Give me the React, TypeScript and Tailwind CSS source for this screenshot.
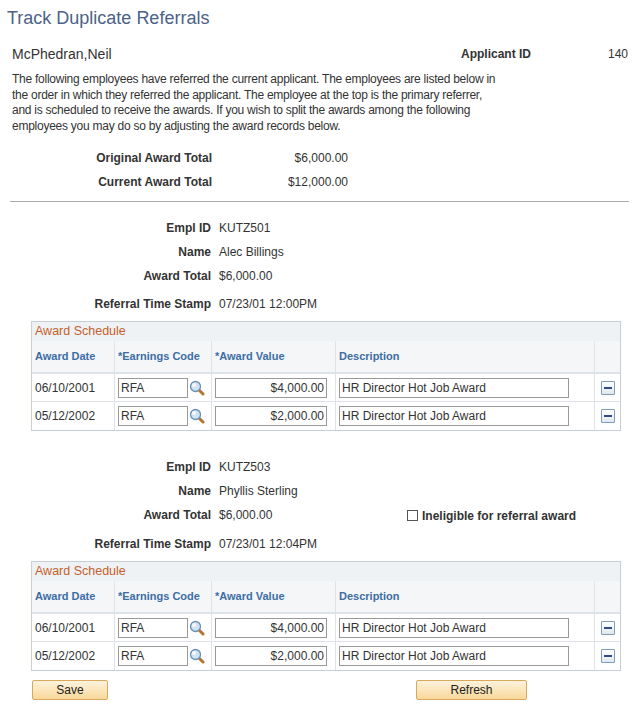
import React from "react";

const Mag = () => (
  <svg width="16" height="16" viewBox="0 0 16 16" className="shrink-0">
    <line x1="9.5" y1="9.5" x2="14" y2="14" stroke="#b8742a" strokeWidth="3" strokeLinecap="round" />
    <circle cx="6.5" cy="6.5" r="5" fill="#cfe3f3" stroke="#6a8fb3" strokeWidth="1.3" />
    <circle cx="5" cy="5" r="2" fill="#fff" opacity="0.8" />
  </svg>
);

const Minus = () => (
  <div className="w-[14px] h-[14px] border border-[#7f9db9] bg-gradient-to-b from-white to-[#dfe8f1] flex items-center justify-center rounded-[1px]">
    <div className="w-[8px] h-[2px] bg-[#2b4f82]" />
  </div>
);

const Field = ({ label, value }: { label: string; value: string }) => (
  <div className="flex items-center">
    <div className="w-[219px] text-right font-bold text-[#333] pr-[8px]">{label}</div>
    <div className="text-[#333]">{value}</div>
  </div>
);

const rows = [
  { d: "06/10/2001", v: "$4,000.00" },
  { d: "05/12/2002", v: "$2,000.00" },
];

const Grid = () => (
  <div className="ml-[31px] w-[590px] border border-[#c7ced5]">
    <div className="h-[19px] bg-[#eef2f5] text-[#c6612a] text-[12.5px] pl-[3px] leading-[19px]">Award Schedule</div>
    <div className="flex h-[33px] bg-[#f4f6f8] border-b-[2px] border-[#dde3e8] text-[#3d6da5] font-bold text-[11px] items-stretch">
      <div className="w-[82px] pl-[3px] flex items-center">Award Date</div>
      <div className="w-[97px] pl-[3px] flex items-center border-l border-[#dde3e8]">*Earnings Code</div>
      <div className="w-[124px] pl-[3px] flex items-center border-l border-[#dde3e8]">*Award Value</div>
      <div className="w-[259px] pl-[3px] flex items-center border-l border-[#dde3e8]">Description</div>
      <div className="flex-1 border-l border-[#dde3e8]" />
    </div>
    {rows.map((r, i) => (
      <div key={i} className={`flex h-[28px] items-stretch text-[#333] ${i === 0 ? "border-b border-[#dde3e8]" : ""}`}>
        <div className="w-[82px] pl-[3px] flex items-center">{r.d}</div>
        <div className="w-[97px] pl-[3px] flex items-center gap-[1px] border-l border-[#dde3e8]">
          <div className="w-[70px] h-[20px] border border-[#999] pl-[2px] leading-[18px]">RFA</div>
          <Mag />
        </div>
        <div className="w-[124px] pl-[3px] flex items-center border-l border-[#dde3e8]">
          <div className="w-[112px] h-[20px] border border-[#999] pr-[2px] text-right leading-[18px]">{r.v}</div>
        </div>
        <div className="w-[259px] pl-[3px] flex items-center border-l border-[#dde3e8]">
          <div className="w-[230px] h-[20px] border border-[#999] pl-[2px] leading-[18px]">HR Director Hot Job Award</div>
        </div>
        <div className="flex-1 flex items-center justify-center border-l border-[#dde3e8]">
          <Minus />
        </div>
      </div>
    ))}
  </div>
);

export default function App() {
  return (
    <div className="w-[639px] h-[717px] bg-white text-[12px] text-[#333]" style={{ fontFamily: '"Liberation Sans", Arial, sans-serif' }}>
      <div className="pl-[7px] pt-[7px] text-[18px] text-[#4c6288] leading-[22px]">Track Duplicate Referrals</div>
      <div className="flex items-center mt-[15px] h-[20px]">
        <div className="pl-[12px] text-[14px] w-[461px]">McPhedran,Neil</div>
        <div className="font-bold w-[130px]">Applicant ID</div>
        <div className="w-[37px] text-right">140</div>
      </div>
      <div className="pl-[12px] mt-[8px] leading-[15.5px] w-[500px] text-[12px] tracking-[-0.25px]">
        The following employees have referred the current applicant. The employees are listed below in the order in which they referred the applicant. The employee at the top is the primary referrer, and is scheduled to receive the awards. If you wish to split the awards among the following employees you may do so by adjusting the award records below.
      </div>
      <div className="mt-[17px] flex flex-col gap-[10px]">
        <div className="flex h-[14px] items-center">
          <div className="w-[212px] text-right font-bold">Original Award Total</div>
          <div className="w-[136px] text-right">$6,000.00</div>
        </div>
        <div className="flex h-[14px] items-center">
          <div className="w-[212px] text-right font-bold">Current Award Total</div>
          <div className="w-[136px] text-right">$12,000.00</div>
        </div>
      </div>
      <div className="mx-[10px] mt-[12px] border-t border-[#aaa]" />
      <div className="mt-[17px] flex flex-col gap-[10px]">
        <div className="h-[14px]"><Field label="Empl ID" value="KUTZ501" /></div>
        <div className="h-[14px]"><Field label="Name" value="Alec Billings" /></div>
        <div className="h-[14px]"><Field label="Award Total" value="$6,000.00" /></div>
        <div className="h-[14px] mt-[4px]"><Field label="Referral Time Stamp" value="07/23/01 12:00PM" /></div>
      </div>
      <div className="mt-[12px]"><Grid /></div>
      <div className="mt-[27px] flex flex-col gap-[10px]">
        <div className="h-[14px]"><Field label="Empl ID" value="KUTZ503" /></div>
        <div className="h-[14px]"><Field label="Name" value="Phyllis Sterling" /></div>
        <div className="h-[14px] flex">
          <div className="w-[407px]"><Field label="Award Total" value="$6,000.00" /></div>
          <div className="flex items-center gap-[4px] mt-[5px]">
            <div className="w-[11px] h-[11px] border border-[#555] bg-white" />
            <span className="font-bold">Ineligible for referral award</span>
          </div>
        </div>
        <div className="h-[14px] mt-[5px]"><Field label="Referral Time Stamp" value="07/23/01 12:04PM" /></div>
      </div>
      <div className="mt-[12px]"><Grid /></div>
      <div className="flex mt-[9px]">
        <button className="ml-[32px] w-[76px] h-[20px] rounded-[2px] border border-[#d9a85a] bg-gradient-to-b from-[#fdf3dc] to-[#f8d89a] text-[12px] text-[#222]">Save</button>
        <button className="ml-[308px] w-[111px] h-[20px] rounded-[2px] border border-[#d9a85a] bg-gradient-to-b from-[#fdf3dc] to-[#f8d89a] text-[12px] text-[#222]">Refresh</button>
      </div>
    </div>
  );
}
